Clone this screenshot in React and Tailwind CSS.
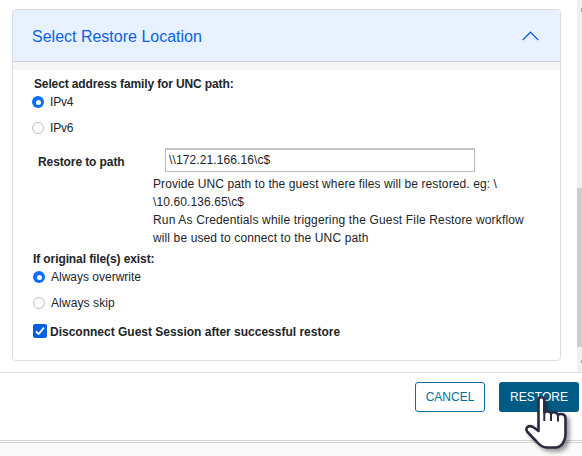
import React from "react";

function Radio({ checked, label, className }) {
  return (
    <label className={`flex h-[18px] items-center ${className}`}>
      <span
        className={
          checked
            ? "flex size-3 items-center justify-center rounded-full bg-[#0d6efd]"
            : "size-3 rounded-full border border-[#bfbfbf] bg-white"
        }
      >
        {checked && <span className="size-[5px] rounded-full bg-white" />}
      </span>
      <span className="ml-[6px]">{label}</span>
    </label>
  );
}

function HandCursor() {
  return (
    <svg
      className="absolute left-[522px] top-[390px] drop-shadow-[3px_3px_2px_rgba(0,0,0,0.4)]"
      width="48"
      height="62"
      viewBox="0 0 48 62"
      fill="none"
    >
      <path
        d="M16.500 41V10C16.500 6.300 22.300 6.300 22.300 10V22.500C24 20.800 28 21 29 23.500C31 21.500 35 22 36 25C38.500 23 43.500 24 43.500 28.500V44C43.500 50 40.500 57.500 33 57.500H25C20 57.500 17 54.500 14.500 51.500L5.500 42C2.500 38 6.500 34.500 11 37L16.500 41Z"
        fill="white"
        stroke="#2b2c40"
        strokeWidth="2.6"
        strokeLinejoin="round"
      />
      <path d="M22.300 21V31M29 23V31M36 24.500V31.500" stroke="#2b2c40" strokeWidth="2" />
    </svg>
  );
}

export default function App() {
  return (
    <div className="relative flex h-[456px] w-[582px] flex-col overflow-hidden bg-white font-['Liberation_Sans',Arial,sans-serif] text-[12px] leading-[18px] text-[#212529]">
      <div className="flex h-[372px] justify-between">
        <section className="ml-3 mt-[9px] h-[352px] w-[549px] overflow-hidden rounded-[4px] border border-[#dcdddf]">
          <header className="flex h-[52px] items-center justify-between border-b border-[#c6cbdf] bg-[#e7f1ff] pl-[19px] pr-[21px] text-[#0c63e4]">
            <h2 className="pt-0.5 text-[16px] leading-6 tracking-[0px]">Select Restore Location</h2>
            <svg width="17" height="10" viewBox="0 0 17 10" fill="none">
              <path d="M0.700 9L8.500 1.200L16.300 9" stroke="currentColor" strokeWidth="1.3" />
            </svg>
          </header>
          <div className="h-2 bg-[#f6f6f6]" />
          <div className="pl-5 pt-[5px]">
            <p className="pl-px font-bold tracking-[-0.13px]">Select address family for UNC path:</p>
            <Radio checked label="IPv4" className="-ml-px tracking-[-0.2px]" />
            <Radio label="IPv6" className="-ml-px mt-2 tracking-[-0.2px]" />
            <div className="mt-[11px] flex">
              <div className="w-[120px] pl-[5px] pt-[5px] font-bold tracking-[-0.1px]">Restore to path</div>
              <div>
                <div className="ml-3 flex h-6 w-[310px] items-center border border-t-2 border-[#bdbdbd] border-t-[#c5c5c5] pb-px pl-[3px] tracking-[0.11px]">
                  {"\\\\172.21.166.16\\c$"}
                </div>
                <div className="mt-[3px] whitespace-nowrap">
                  <p className="tracking-[0.1px]">{"Provide UNC path to the guest where files will be restored. eg: \\"}</p>
                  <p className="tracking-[0.1px]">{"\\10.60.136.65\\c$"}</p>
                  <p className="tracking-[0.16px]">Run As Credentials while triggering the Guest File Restore workflow</p>
                  <p className="tracking-[0.12px]">will be used to connect to the UNC path</p>
                </div>
              </div>
            </div>
            <p className="mt-[3px] font-bold tracking-[-0.1px]">If original file(s) exist:</p>
            <Radio checked label="Always overwrite" className="" />
            <Radio label="Always skip" className="mt-2 tracking-[0.1px]" />
            <label className="mt-[10px] flex h-[18px] items-center font-bold">
              <span className="flex size-[14px] items-center justify-center rounded-[2px] bg-[#0060df]">
                <svg width="12" height="12" viewBox="0 0 12 12" fill="none">
                  <path d="M2 6.500L4.700 9L10 2.700" stroke="white" strokeWidth="1.8" />
                </svg>
              </span>
              <span className="ml-[3px] pt-px">Disconnect Guest Session after successful restore</span>
            </label>
          </div>
        </section>
        <div className="flex w-[5px] flex-col bg-[#f0f0f0]">
          <span className="ml-1 mt-2 h-1 w-px bg-[#a0a0a0]" />
          <div className="mt-[176px] h-[159px] bg-[#cdcdcd]" />
          <span className="ml-1 mt-[13px] h-[3px] w-px bg-[#a0a0a0]" />
        </div>
      </div>
      <footer className="flex h-[68px] justify-end gap-[14px] border-t border-[#dedfe3] pr-[3px] pt-[9px]">
        <button className="h-[30px] w-[70px] rounded-[3px] border border-[#0b6e9d] text-[#0b6e9d]">CANCEL</button>
        <button className="h-[30px] w-20 rounded-[3px] bg-[#005c85] text-white">RESTORE</button>
      </footer>
      <div className="flex-1 border-t-[3px] border-double border-[#d5d5d5] bg-[#fafafa]" />
      <HandCursor />
    </div>
  );
}
